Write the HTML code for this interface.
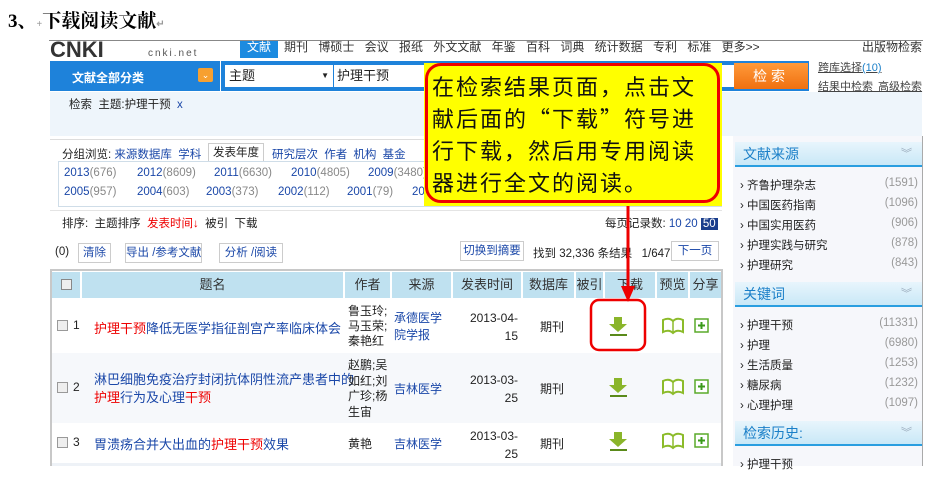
<!DOCTYPE html>
<html><head><meta charset="utf-8"><style>
*{margin:0;padding:0;box-sizing:border-box}
body{width:929px;height:483px;background:#fff;position:relative;overflow:hidden;font-family:"Liberation Sans","Noto Sans CJK SC",sans-serif;font-size:12px;color:#222}
.a{position:absolute;white-space:nowrap}
.b{color:#1a47a8}
.r{color:#e00}
.g{color:#888}
.th{position:absolute;top:272px;height:26px;background:#bfe1f0;font-size:13px;text-align:center;line-height:26px;color:#333}
.side{position:absolute;left:735px;width:187px;height:25px;background:linear-gradient(#e8f5fc,#c9e8f7);border-bottom:2px solid #2a9ee0;color:#1a7fc8;font-size:14px;line-height:24px;padding-left:8px}
.si{position:absolute;left:740px;width:178px;font-size:11.5px}
.si span{position:absolute;right:0;color:#999}
</style></head><body>
<div class="a" style="left:8px;top:6px;font:bold 19px 'Liberation Serif','Noto Serif CJK SC',serif;color:#000">3、<span style="font-size:10px;color:#999">+</span>下载阅读文献<span style="font-size:10px;color:#999">↵</span></div>
<!-- nav -->
<div class="a" style="left:49px;top:40px;width:874px;height:1px;background:#888"></div>
<div class="a" style="left:50px;top:41px;font:bold 22px 'Liberation Sans';color:#333;line-height:18px;overflow:hidden;height:18px">CNKI</div>
<div class="a" style="left:148px;top:48px;font-size:10px;letter-spacing:2px;color:#555">cnki.net</div>
<div class="a" style="left:240px;top:41px;width:38px;height:17px;background:#1c8be0;color:#fff;font-size:12px;text-align:center;line-height:13px">文献</div>
<div class="a" style="left:284px;top:41px;font-size:12px;color:#333;line-height:13px;word-spacing:7px">期刊 博硕士 会议 报纸 外文文献 年鉴 百科 词典 统计数据 专利 标准 更多>></div>
<div class="a" style="left:862px;top:41px;font-size:12px;color:#333;line-height:13px">出版物检索</div>
<!-- search bar -->
<div class="a" style="left:50px;top:61px;width:170px;height:30px;background:#1e82da"></div>
<div class="a" style="left:72px;top:69px;color:#fff;font-weight:bold;font-size:12px">文献全部分类</div>
<div class="a" style="left:198px;top:68px;width:15px;height:14px;background:#f7a030;border-radius:2px;color:#fff;font-size:9px;text-align:center;line-height:14px">⌄</div>
<div class="a" style="left:221px;top:61px;width:588px;height:30px;background:#1e82da"></div>
<div class="a" style="left:225px;top:65px;width:108px;height:22px;background:#fff;font-size:13px;padding-left:4px;line-height:22px">主题<span style="position:absolute;right:4px;font-size:8px">▼</span></div>
<div class="a" style="left:334px;top:65px;width:400px;height:22px;background:#fff;font-size:13px;padding-left:3px;line-height:22px">护理干预</div>
<div class="a" style="left:734px;top:63px;width:74px;height:26px;background:linear-gradient(#ff9a3a,#f07010);color:#fff;font-size:14px;text-align:center;line-height:26px;letter-spacing:4px">检索</div>
<div class="a" style="left:818px;top:59px;font-size:11px;color:#444;text-decoration:underline">跨库选择<span style="color:#1a7fc8">(10)</span></div>
<div class="a" style="left:818px;top:78px;font-size:11px;color:#444;text-decoration:underline;word-spacing:2px">结果中检索 高级检索</div>
<div class="a" style="left:50px;top:92px;width:872px;height:44px;background:#eef5fb"></div>
<div class="a" style="left:69px;top:96px;font-size:11.5px">检索 &nbsp;主题:护理干预 <span class="b">&nbsp;x</span></div>
<!-- group panel -->
<div class="a" style="left:50px;top:139px;width:672px;height:1px;background:#ddd"></div>
<div class="a" style="left:62px;top:146px;font-size:11.5px">分组浏览: <span class="b">来源数据库 &nbsp;学科</span></div>
<div class="a" style="left:208px;top:143px;width:56px;height:19px;border:1px solid #ccc;border-bottom:none;background:#fff;font-size:11.5px;text-align:center;line-height:18px">发表年度</div>
<div class="a b" style="left:272px;top:146px;font-size:11.5px;word-spacing:3px">研究层次 作者 机构 基金</div>
<div class="a" style="left:58px;top:161px;width:664px;height:46px;border:1px solid #cfdde8"></div>
<div class="a b" style="left:64px;top:167px;font-size:11.5px">2013<span class="g">(676)</span></div>
<div class="a b" style="left:137px;top:167px;font-size:11.5px">2012<span class="g">(8609)</span></div>
<div class="a b" style="left:214px;top:167px;font-size:11.5px">2011<span class="g">(6630)</span></div>
<div class="a b" style="left:291px;top:167px;font-size:11.5px">2010<span class="g">(4805)</span></div>
<div class="a b" style="left:368px;top:167px;font-size:11.5px">2009<span class="g">(3480)</span></div>
<div class="a b" style="left:64px;top:186px;font-size:11.5px">2005<span class="g">(957)</span></div>
<div class="a b" style="left:137px;top:186px;font-size:11.5px">2004<span class="g">(603)</span></div>
<div class="a b" style="left:206px;top:186px;font-size:11.5px">2003<span class="g">(373)</span></div>
<div class="a b" style="left:278px;top:186px;font-size:11.5px">2002<span class="g">(112)</span></div>
<div class="a b" style="left:347px;top:186px;font-size:11.5px">2001<span class="g">(79)</span></div>
<div class="a b" style="left:412px;top:186px;font-size:11.5px">20</div>
<div class="a" style="left:50px;top:210px;width:672px;height:1px;background:#e4e4e4"></div>
<div class="a" style="left:62px;top:215px;font-size:11.5px">排序: &nbsp;主题排序 &nbsp;<span class="r">发表时间↓</span> &nbsp;被引 &nbsp;下载</div>
<div class="a" style="left:605px;top:215px;font-size:11.5px">每页记录数: <span class="b">10 20</span> <span style="background:#1a3e8c;color:#fff;padding:0 2px">50</span></div>
<div class="a" style="left:55px;top:246px;font-size:11.5px">(0)</div>
<div class="a b" style="left:78px;top:243px;width:33px;height:20px;border:1px solid #ccc;text-align:center;line-height:18px;font-size:11.5px">清除</div>
<div class="a b" style="left:125px;top:243px;width:77px;height:20px;border:1px solid #ccc;text-align:center;line-height:18px;font-size:11.5px">导出 /参考文献</div>
<div class="a b" style="left:219px;top:243px;width:64px;height:20px;border:1px solid #ccc;text-align:center;line-height:18px;font-size:11.5px">分析 /阅读</div>
<div class="a b" style="left:460px;top:241px;width:64px;height:20px;border:1px solid #ccc;text-align:center;line-height:18px;font-size:11.5px">切换到摘要</div>
<div class="a" style="left:533px;top:245px;font-size:11.5px">找到 32,336 条结果 &nbsp;&nbsp;1/647</div>
<div class="a b" style="left:671px;top:241px;width:48px;height:20px;border:1px solid #ccc;text-align:center;line-height:18px;font-size:11.5px">下一页</div>
<!-- table -->
<div class="a" style="left:50px;top:269px;width:673px;height:197px;border:2px solid #c8c8c8;border-bottom:none"></div>
<div class="th" style="left:52px;width:28px"><span style="display:inline-block;width:11px;height:11px;border:1px solid #888;background:#eee;margin-top:7px"></span></div>
<div class="th" style="left:82px;width:261px">题名</div>
<div class="th" style="left:345px;width:45px">作者</div>
<div class="th" style="left:392px;width:59px">来源</div>
<div class="th" style="left:453px;width:68px">发表时间</div>
<div class="th" style="left:523px;width:51px">数据库</div>
<div class="th" style="left:576px;width:27px">被引</div>
<div class="th" style="left:605px;width:50px">下载</div>
<div class="th" style="left:657px;width:31px">预览</div>
<div class="th" style="left:690px;width:31px">分享</div>
<div class="a" style="left:52px;top:353px;width:669px;height:70px;background:#f6f8fb"></div>
<!-- row1 -->
<div class="a" style="left:57px;top:320px;width:11px;height:11px;border:1px solid #999;background:#eee"></div><div class="a" style="left:73px;top:318px;font-size:12px">1</div>
<div class="a b" style="left:94px;top:318px;font-size:13px"><span class="r">护理干预</span>降低无医学指征剖宫产率临床体会</div>
<div class="a" style="left:348px;top:304px;font-size:12px;line-height:15px;white-space:normal;width:40px">鲁玉玲;马玉荣;秦艳红</div>
<div class="a b" style="left:394px;top:310px;font-size:12px;line-height:17px;white-space:normal;width:56px">承德医学院学报</div>
<div class="a" style="left:468px;top:309px;font-size:12px;line-height:18px;text-align:right;width:50px;white-space:normal">2013-04-<br>15</div>
<div class="a" style="left:540px;top:318px;font-size:12px">期刊</div>
<!-- row2 -->
<div class="a" style="left:57px;top:382px;width:11px;height:11px;border:1px solid #999;background:#eee"></div><div class="a" style="left:73px;top:380px;font-size:12px">2</div>
<div class="a b" style="left:94px;top:371px;font-size:13px;line-height:18px">淋巴细胞免疫治疗封闭抗体阴性流产患者中的<br><span class="r">护理</span>行为及心理<span class="r">干预</span></div>
<div class="a" style="left:348px;top:358px;font-size:12px;line-height:15.5px;white-space:normal;width:40px">赵鹏;吴如红;刘广珍;杨生宙</div>
<div class="a b" style="left:394px;top:380px;font-size:12px">吉林医学</div>
<div class="a" style="left:468px;top:371px;font-size:12px;line-height:18px;text-align:right;width:50px;white-space:normal">2013-03-<br>25</div>
<div class="a" style="left:540px;top:380px;font-size:12px">期刊</div>
<!-- row3 -->
<div class="a" style="left:57px;top:437px;width:11px;height:11px;border:1px solid #999;background:#eee"></div><div class="a" style="left:73px;top:435px;font-size:12px">3</div>
<div class="a b" style="left:94px;top:434px;font-size:13px">胃溃疡合并大出血的<span class="r">护理干预</span>效果</div>
<div class="a" style="left:348px;top:435px;font-size:12px">黄艳</div>
<div class="a b" style="left:394px;top:435px;font-size:12px">吉林医学</div>
<div class="a" style="left:468px;top:427px;font-size:12px;line-height:18px;text-align:right;width:50px;white-space:normal">2013-03-<br>25</div>
<div class="a" style="left:540px;top:435px;font-size:12px">期刊</div>
<div class="a" style="left:52px;top:463px;width:669px;height:3px;background:#eef2f7"></div>
<!-- icons -->
<svg class="a" style="left:0;top:0" width="929" height="483">
<g id="ic">
<path d="M614 317h8v7h5l-9 8-9-8h5z" fill="#8ab52a"/><rect x="610" y="334" width="17" height="2" fill="#5a8a1a"/>
<path d="M663 320q6-3 10 1q4-4 10-1v12q-6-3-10 1q-4-4-10-1z" fill="#fff" stroke="#8cbb2a" stroke-width="2"/><line x1="673" y1="321" x2="673" y2="333" stroke="#8cbb2a" stroke-width="1.5"/>
<rect x="695" y="319" width="13" height="13" fill="#fff" stroke="#5aaa2a" stroke-width="1.5"/><path d="M701.5 322v7M698 325.5h7" stroke="#3a9a1a" stroke-width="2"/>
</g>
<use href="#ic" y="61"/><use href="#ic" y="115"/>
<rect x="591" y="300" width="54" height="50" rx="8" fill="none" stroke="#e00" stroke-width="2.5"/>
<line x1="628" y1="200" x2="628" y2="290" stroke="#e00" stroke-width="3"/>
<path d="M621 286l7 16 7-16z" fill="#e00"/>
</svg>
<!-- callout -->
<div class="a" style="left:424px;top:63px;width:298px;height:143px;background:#ff0"></div>
<div class="a" style="left:425px;top:63px;width:295px;height:140px;border:3px solid #e00;border-radius:16px;background:#ff0;font-family:'Noto Sans CJK SC',sans-serif;font-size:22px;line-height:32px;padding:4px 0 0 4px;color:#111;letter-spacing:2px">在检索结果页面，点击文<br>献后面的“下载”符号进<br>行下载，然后用专用阅读<br>器进行全文的阅读。</div>
<!-- sidebar -->
<div class="a" style="left:733px;top:136px;width:190px;height:330px;background:#f6f7fb"></div>
<div class="a" style="left:922px;top:136px;width:1px;height:330px;background:#aaa"></div>
<div class="side" style="top:142px">文献来源<span style="position:absolute;right:10px;color:#9ab;font-size:11px">︾</span></div>
<div class="si" style="top:177px">› 齐鲁护理杂志<span>(1591)</span></div>
<div class="si" style="top:197px">› 中国医药指南<span>(1096)</span></div>
<div class="si" style="top:217px">› 中国实用医药<span>(906)</span></div>
<div class="si" style="top:237px">› 护理实践与研究<span>(878)</span></div>
<div class="si" style="top:257px">› 护理研究<span>(843)</span></div>
<div class="side" style="top:282px">关键词<span style="position:absolute;right:10px;color:#9ab;font-size:11px">︾</span></div>
<div class="si" style="top:317px">› 护理干预<span>(11331)</span></div>
<div class="si" style="top:337px">› 护理<span>(6980)</span></div>
<div class="si" style="top:357px">› 生活质量<span>(1253)</span></div>
<div class="si" style="top:377px">› 糖尿病<span>(1232)</span></div>
<div class="si" style="top:397px">› 心理护理<span>(1097)</span></div>
<div class="side" style="top:421px">检索历史:<span style="position:absolute;right:10px;color:#9ab;font-size:11px">︾</span></div>
<div class="si" style="top:456px">› 护理干预</div>
</body></html>
